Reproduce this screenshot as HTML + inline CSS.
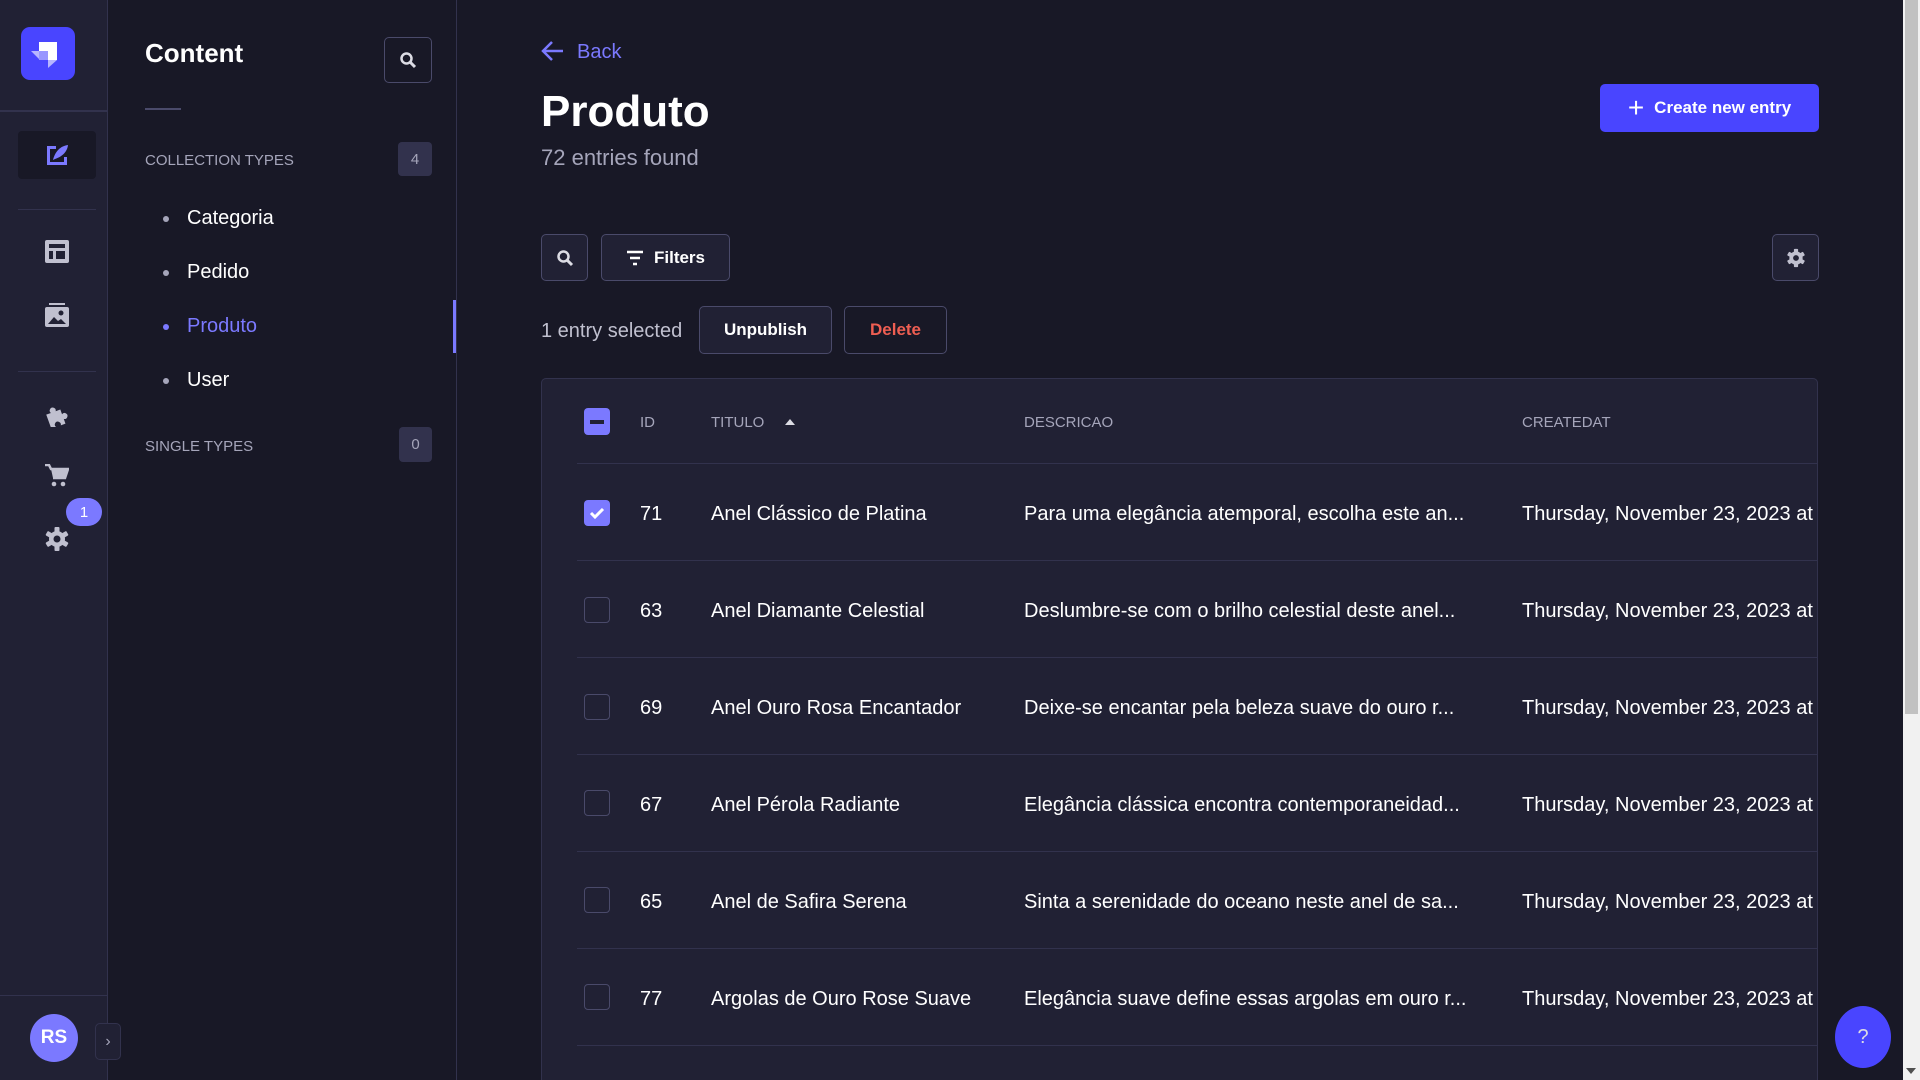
<!DOCTYPE html>
<html style="overflow:hidden;width:1920px;height:1080px"><head><meta charset="utf-8"><style>
*{box-sizing:border-box;margin:0;padding:0}
body{width:1920px;height:1080px;overflow:hidden;background:#181826;font-family:"Liberation Sans",sans-serif;color:#fff;position:relative}
.abs{position:absolute}
.nav{left:0;top:0;width:108px;height:1080px;background:#212134;border-right:1px solid #32324d}
.panel{left:108px;top:0;width:349px;height:1080px;background:#181826;border-right:1px solid #32324d}
.btn{position:absolute;border:1px solid #4a4a6a;border-radius:5px;background:#212134;display:flex;align-items:center;justify-content:center;font-weight:bold;font-size:17px}
.badge{position:absolute;background:#32324d;border-radius:4px;color:#a5a5ba;font-size:15px;display:flex;align-items:center;justify-content:center}
.sec{position:absolute;left:145px;font-size:15px;color:#a5a5ba}
.item{position:absolute;left:187px;font-size:20px}
.dot{position:absolute;left:163px;width:6px;height:6px;border-radius:3px;background:#a5a5ba}
.th{position:absolute;top:414px;font-size:15px;color:#a5a5ba}
.td{position:absolute;font-size:20px;white-space:nowrap}
.cb{position:absolute;left:584px;width:26px;height:26px;border:1px solid #4a4a6a;border-radius:4px;background:#212134}
.line{position:absolute;left:577px;width:1241px;height:1px;background:#32324d}
</style></head><body>
<div class="abs nav"></div>
<div class="abs" style="left:21px;top:27px;width:54px;height:53px;background:#4945ff;border-radius:9px"></div>
<svg class="abs" style="left:30px;top:40px" width="30" height="28" viewBox="0 0 30 28"><path d="M9 2H27V20H18V11H9Z" fill="#fff"/><path d="M1 11H9V19Z" fill="#b7b5ff"/><path d="M9 11H18V20H9Z" fill="#9896ff"/><path d="M18 20H27L18 28Z" fill="#b7b5ff"/></svg>
<div class="abs" style="left:0;top:110px;width:108px;height:2px;background:#32324d"></div>
<div class="abs" style="left:18px;top:131px;width:78px;height:48px;background:#181826;border-radius:4px"></div>
<svg class="abs" style="left:44px;top:142px" width="26" height="26" viewBox="0 0 26 26"><path d="M3 4h9v3H6v13h14v-5h3v8H3z" fill="#7b79ff"/><path d="M9 18c2-8 7-14 15-15-1 8-7 12-13 14z" fill="#7b79ff"/></svg>
<div class="abs" style="left:18px;top:209px;width:78px;height:1px;background:#32324d"></div>
<svg class="abs" style="left:45px;top:240px" width="24" height="24" viewBox="0 0 24 24"><rect x="0" y="0" width="24" height="23" rx="2" fill="#c0c0cf"/><rect x="4" y="4" width="16" height="4" fill="#212134"/><rect x="4" y="11" width="4" height="8" fill="#212134"/><rect x="11" y="11" width="9" height="8" fill="#212134"/></svg>
<svg class="abs" style="left:45px;top:303px" width="24" height="24" viewBox="0 0 24 24"><rect x="4" y="0" width="16" height="2" fill="#c0c0cf"/><rect x="0" y="4" width="24" height="20" rx="2" fill="#c0c0cf"/><path d="M3 21l6-7 4 4 3-2 5 5z" fill="#212134"/><circle cx="16" cy="10" r="2.5" fill="#212134"/></svg>
<div class="abs" style="left:18px;top:371px;width:78px;height:1px;background:#32324d"></div>
<svg class="abs" style="left:45px;top:403px" width="24" height="24" viewBox="0 0 24 24"><path d="M2 8h5a3 3 0 1 1 5 0h5v5a3 3 0 1 1 0 5v5h-5a3 3 0 1 0-5 0H2z" fill="#c0c0cf" transform="rotate(-20 12 12)"/></svg>
<svg class="abs" style="left:45px;top:464px" width="24" height="24" viewBox="0 0 24 24"><path d="M0 1h4l2 4h17l-3 9H8" fill="none" stroke="#c0c0cf" stroke-width="2.5"/><path d="M6 5h17l-3 9H8z" fill="#c0c0cf"/><circle cx="9" cy="20" r="2.3" fill="#c0c0cf"/><circle cx="18" cy="20" r="2.3" fill="#c0c0cf"/></svg>
<div class="abs" style="left:66px;top:498px;width:36px;height:28px;border-radius:14px;background:#7b79ff;font-size:15px;display:flex;align-items:center;justify-content:center">1</div>
<svg class="abs" style="left:45px;top:527px" width="24" height="24" viewBox="0 0 24 24"><g fill="#c0c0cf"><circle cx="12" cy="12" r="8"/><rect x="9.5" y="0" width="5" height="24" rx="1"/><rect x="9.5" y="0" width="5" height="24" rx="1" transform="rotate(60 12 12)"/><rect x="9.5" y="0" width="5" height="24" rx="1" transform="rotate(120 12 12)"/></g><circle cx="12" cy="12" r="3.5" fill="#212134"/></svg>
<div class="abs" style="left:0;top:995px;width:108px;height:1px;background:#32324d"></div>
<div class="abs" style="left:30px;top:1014px;width:48px;height:48px;border-radius:24px;background:#7b79ff;font-weight:bold;font-size:19px;display:flex;align-items:center;justify-content:center">RS</div>

<div class="abs panel"></div>
<div class="abs" style="left:95px;top:1023px;width:26px;height:37px;border:1px solid #32324d;border-radius:5px;background:#212134;color:#a5a5ba;display:flex;align-items:center;justify-content:center;font-size:16px">›</div>
<div class="abs" style="left:145px;top:38px;font-size:26px;font-weight:bold">Content</div>
<div class="btn" style="left:384px;top:37px;width:48px;height:46px;background:#181826"><svg width="18" height="18" viewBox="0 0 18 18"><circle cx="7.5" cy="7.5" r="5" fill="none" stroke="#dcdce4" stroke-width="2.5"/><path d="M11 11l5 5" stroke="#dcdce4" stroke-width="3"/></svg></div>
<div class="abs" style="left:145px;top:108px;width:36px;height:2px;background:#4a4a6a"></div>
<div class="sec" style="top:152px">COLLECTION TYPES</div>
<div class="badge" style="left:398px;top:142px;width:34px;height:34px">4</div>
<div class="dot" style="top:216px"></div><div class="item" style="top:207px">Categoria</div>
<div class="dot" style="top:270px"></div><div class="item" style="top:261px">Pedido</div>
<div class="dot" style="top:324px;background:#7b79ff"></div><div class="item" style="top:315px;color:#7b79ff">Produto</div>
<div class="dot" style="top:378px"></div><div class="item" style="top:369px">User</div>
<div class="abs" style="left:453px;top:300px;width:3px;height:53px;background:#7b79ff"></div>
<div class="sec" style="top:438px">SINGLE TYPES</div>
<div class="badge" style="left:399px;top:427px;width:33px;height:35px">0</div>

<svg class="abs" style="left:541px;top:40px" width="24" height="22" viewBox="0 0 24 22"><path d="M22 11H3M11 2L2 11l9 9" fill="none" stroke="#7b79ff" stroke-width="2.5"/></svg>
<div class="abs" style="left:577px;top:41px;font-size:20px;color:#7b79ff">Back</div>
<div class="abs" style="left:541px;top:87px;font-size:44px;font-weight:bold">Produto</div>
<div class="abs" style="left:541px;top:145px;font-size:22px;color:#a5a5ba">72 entries found</div>
<div class="abs" style="left:1600px;top:84px;width:219px;height:48px;background:#4945ff;border-radius:5px;font-weight:bold;font-size:17px;display:flex;align-items:center;justify-content:center;gap:10px"><span style="font-size:28px;font-weight:normal;line-height:1">+</span>Create new entry</div>

<div class="btn" style="left:541px;top:234px;width:47px;height:47px"><svg width="18" height="18" viewBox="0 0 18 18"><circle cx="7.5" cy="7.5" r="5" fill="none" stroke="#dcdce4" stroke-width="2.5"/><path d="M11 11l5 5" stroke="#dcdce4" stroke-width="3"/></svg></div>
<div class="btn" style="left:601px;top:234px;width:129px;height:47px;gap:10px"><svg width="18" height="16" viewBox="0 0 18 16"><path d="M1 2h16M4 8h10M7 14h4" stroke="#fff" stroke-width="2.5"/></svg>Filters</div>
<div class="btn" style="left:1772px;top:234px;width:47px;height:47px"><svg width="20" height="20" viewBox="0 0 24 24"><g fill="#c0c0cf"><circle cx="12" cy="12" r="8"/><rect x="9.5" y="1" width="5" height="22" rx="1"/><rect x="9.5" y="1" width="5" height="22" rx="1" transform="rotate(60 12 12)"/><rect x="9.5" y="1" width="5" height="22" rx="1" transform="rotate(120 12 12)"/></g><circle cx="12" cy="12" r="3.5" fill="#212134"/></svg></div>

<div class="abs" style="left:541px;top:320px;font-size:20px;color:#c0c0cf">1 entry selected</div>
<div class="btn" style="left:699px;top:306px;width:133px;height:48px">Unpublish</div>
<div class="btn" style="left:844px;top:306px;width:103px;height:48px;background:#181826;color:#ee5e52">Delete</div>

<div class="abs" style="left:541px;top:378px;width:1277px;height:702px;background:#212134;border:1px solid #32324d;border-bottom:none;border-radius:5px 5px 0 0"></div>
<div class="abs" style="left:584px;top:408px;width:26px;height:27px;border-radius:4px;background:#7b79ff"><div style="margin:12px 6px;height:4px;background:#212134"></div></div>
<div class="th" style="left:640px">ID</div>
<div class="th" style="left:711px">TITULO</div>
<svg class="abs" style="left:784px;top:418px" width="12" height="8"><path d="M1 7L6 1l5 6z" fill="#dcdce4"/></svg>
<div class="th" style="left:1024px">DESCRICAO</div>
<div class="th" style="left:1522px">CREATEDAT</div>
<div class="line" style="top:463px"></div>

<div style="position:absolute;left:0;top:0;width:1818px;height:1080px;overflow:hidden">
<div class="cb" style="top:500px;background:#7b79ff;border:none"><svg width="26" height="26" viewBox="0 0 26 26"><path d="M7 13l4 4 8-8" fill="none" stroke="#fff" stroke-width="3"/></svg></div>
<div class="td" style="left:640px;top:503px">71</div><div class="td" style="left:711px;top:503px">Anel Clássico de Platina</div><div class="td" style="left:1024px;top:503px">Para uma elegância atemporal, escolha este an...</div><div class="td" style="left:1522px;top:503px">Thursday, November 23, 2023 at</div>
<div class="line" style="top:560px"></div>
<div class="cb" style="top:597px"></div>
<div class="td" style="left:640px;top:600px">63</div><div class="td" style="left:711px;top:600px">Anel Diamante Celestial</div><div class="td" style="left:1024px;top:600px">Deslumbre-se com o brilho celestial deste anel...</div><div class="td" style="left:1522px;top:600px">Thursday, November 23, 2023 at</div>
<div class="line" style="top:657px"></div>
<div class="cb" style="top:694px"></div>
<div class="td" style="left:640px;top:697px">69</div><div class="td" style="left:711px;top:697px">Anel Ouro Rosa Encantador</div><div class="td" style="left:1024px;top:697px">Deixe-se encantar pela beleza suave do ouro r...</div><div class="td" style="left:1522px;top:697px">Thursday, November 23, 2023 at</div>
<div class="line" style="top:754px"></div>
<div class="cb" style="top:790px"></div>
<div class="td" style="left:640px;top:794px">67</div><div class="td" style="left:711px;top:794px">Anel Pérola Radiante</div><div class="td" style="left:1024px;top:794px">Elegância clássica encontra contemporaneidad...</div><div class="td" style="left:1522px;top:794px">Thursday, November 23, 2023 at</div>
<div class="line" style="top:851px"></div>
<div class="cb" style="top:887px"></div>
<div class="td" style="left:640px;top:891px">65</div><div class="td" style="left:711px;top:891px">Anel de Safira Serena</div><div class="td" style="left:1024px;top:891px">Sinta a serenidade do oceano neste anel de sa...</div><div class="td" style="left:1522px;top:891px">Thursday, November 23, 2023 at</div>
<div class="line" style="top:948px"></div>
<div class="cb" style="top:984px"></div>
<div class="td" style="left:640px;top:988px">77</div><div class="td" style="left:711px;top:988px">Argolas de Ouro Rose Suave</div><div class="td" style="left:1024px;top:988px">Elegância suave define essas argolas em ouro r...</div><div class="td" style="left:1522px;top:988px">Thursday, November 23, 2023 at</div>
<div class="line" style="top:1045px"></div>
</div>

<div class="abs" style="left:1835px;top:1006px;width:56px;height:62px;border-radius:50%;background:#4945ff;color:#dcdce4;font-size:20px;display:flex;align-items:center;justify-content:center">?</div>
<div class="abs" style="left:1903px;top:0;width:17px;height:1080px;background:#f1f1f1"></div>
<div class="abs" style="left:1905px;top:0;width:13px;height:714px;background:#c1c1c1"></div>
<svg class="abs" style="left:1906px;top:1068px" width="10" height="6"><path d="M0 0h10L5 6z" fill="#505050"/></svg>
</body></html>
